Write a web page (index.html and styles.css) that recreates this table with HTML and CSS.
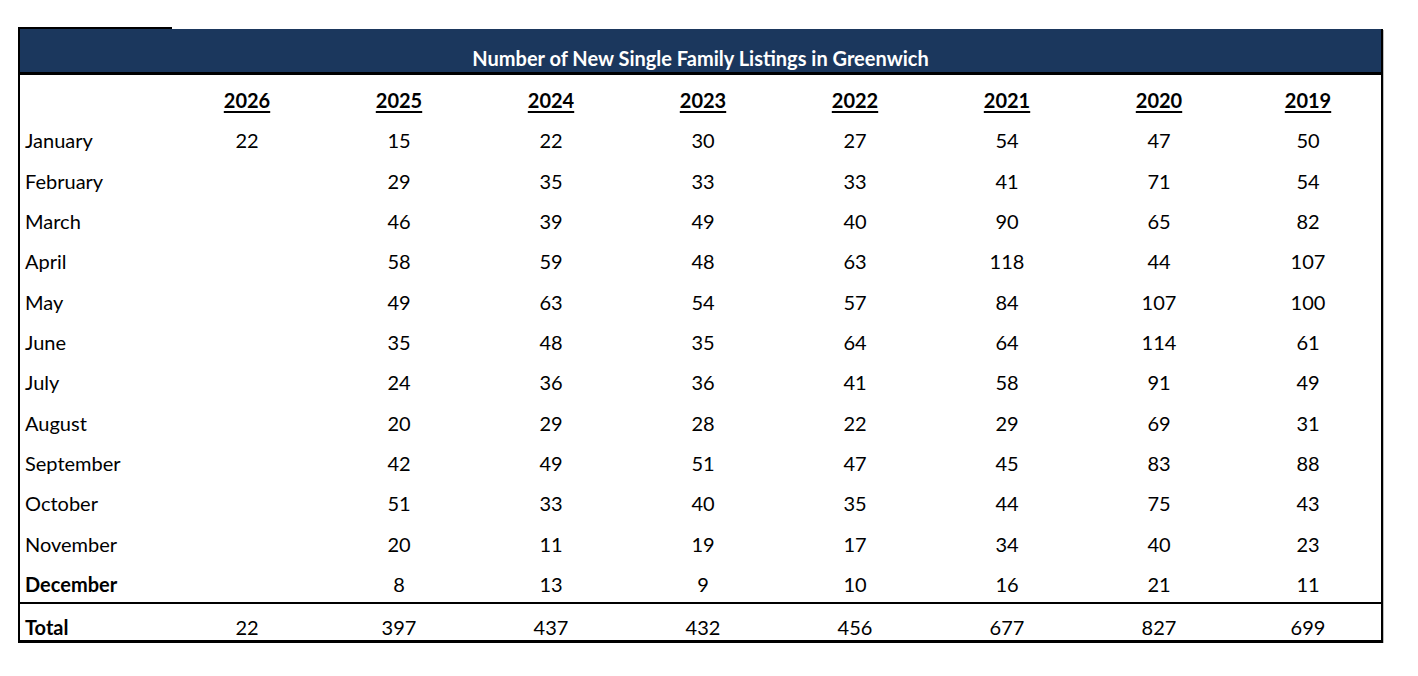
FILE: index.html
```html
<!DOCTYPE html>
<html>
<head>
<meta charset="utf-8">
<link rel="stylesheet" href="styles.css">
</head>
<body>
<div class="page">
  <div class="topline"></div>
  <div class="sheet">
    <div class="title">Number of New Single Family Listings in Greenwich</div>
    <div class="row head">
      <div class="label"></div>
      <div class="yr">2026</div><div class="yr">2025</div><div class="yr">2024</div><div class="yr">2023</div><div class="yr">2022</div><div class="yr">2021</div><div class="yr">2020</div><div class="yr">2019</div>
    </div>
    <div class="row"><div class="label">January</div><div>22</div><div>15</div><div>22</div><div>30</div><div>27</div><div>54</div><div>47</div><div>50</div></div>
    <div class="row"><div class="label">February</div><div></div><div>29</div><div>35</div><div>33</div><div>33</div><div>41</div><div>71</div><div>54</div></div>
    <div class="row"><div class="label">March</div><div></div><div>46</div><div>39</div><div>49</div><div>40</div><div>90</div><div>65</div><div>82</div></div>
    <div class="row"><div class="label">April</div><div></div><div>58</div><div>59</div><div>48</div><div>63</div><div>118</div><div>44</div><div>107</div></div>
    <div class="row"><div class="label">May</div><div></div><div>49</div><div>63</div><div>54</div><div>57</div><div>84</div><div>107</div><div>100</div></div>
    <div class="row"><div class="label">June</div><div></div><div>35</div><div>48</div><div>35</div><div>64</div><div>64</div><div>114</div><div>61</div></div>
    <div class="row"><div class="label">July</div><div></div><div>24</div><div>36</div><div>36</div><div>41</div><div>58</div><div>91</div><div>49</div></div>
    <div class="row"><div class="label">August</div><div></div><div>20</div><div>29</div><div>28</div><div>22</div><div>29</div><div>69</div><div>31</div></div>
    <div class="row"><div class="label">September</div><div></div><div>42</div><div>49</div><div>51</div><div>47</div><div>45</div><div>83</div><div>88</div></div>
    <div class="row"><div class="label">October</div><div></div><div>51</div><div>33</div><div>40</div><div>35</div><div>44</div><div>75</div><div>43</div></div>
    <div class="row"><div class="label">November</div><div></div><div>20</div><div>11</div><div>19</div><div>17</div><div>34</div><div>40</div><div>23</div></div>
    <div class="row last"><div class="label bold">December</div><div></div><div>8</div><div>13</div><div>9</div><div>10</div><div>16</div><div>21</div><div>11</div></div>
    <div class="row total"><div class="label bold">Total</div><div>22</div><div>397</div><div>437</div><div>432</div><div>456</div><div>677</div><div>827</div><div>699</div></div>
  </div>
</div>
</body>
</html>
```

FILE: styles.css
```css
html, body {
  margin: 0;
  padding: 0;
  background: #ffffff;
}
body {
  font-family: Lato, "Open Sans", sans-serif;
  color: #000000;
}
.page {
  padding: 27px 0 0 18px;
}
.topline {
  width: 154px;
  height: 2px;
  background: #000000;
}
.sheet {
  width: 1361px;
  border-left: 2px solid #000000;
  border-right: 2px solid #000000;
  border-bottom: 3px solid #000000;
  box-shadow: 1px 1px 0 #bdbdbd;
}
.title {
  box-sizing: border-box;
  height: 46px;
  padding-top: 18px;
  line-height: 22px;
  background: #1b375d;
  border-bottom: 3px solid #000000;
  color: #ffffff;
  font-weight: 700;
  font-size: 20px;
  text-align: center;
}
.row {
  display: grid;
  grid-template-columns: 151px repeat(7, 152px) 146px;
  height: 40.36px;
  align-items: center;
  font-size: 20px;
  line-height: 22px;
}
.row > div {
  text-align: center;
}
.row > .label {
  text-align: left;
  padding-left: 5px;
}
.head {
  height: 40px;
  margin-top: 5px;
}
.yr {
  font-weight: 700;
  text-decoration: underline;
  text-decoration-thickness: 2px;
  text-underline-offset: 3px;
}
.bold {
  font-weight: 700;
}
.last {
  height: 38px;
  align-items: start;
  padding-top: 9px;
  box-sizing: border-box;
}
.total {
  box-sizing: border-box;
  height: 38px;
  border-top: 2px solid #000000;
  align-items: start;
  padding-top: 12px;
}
```
